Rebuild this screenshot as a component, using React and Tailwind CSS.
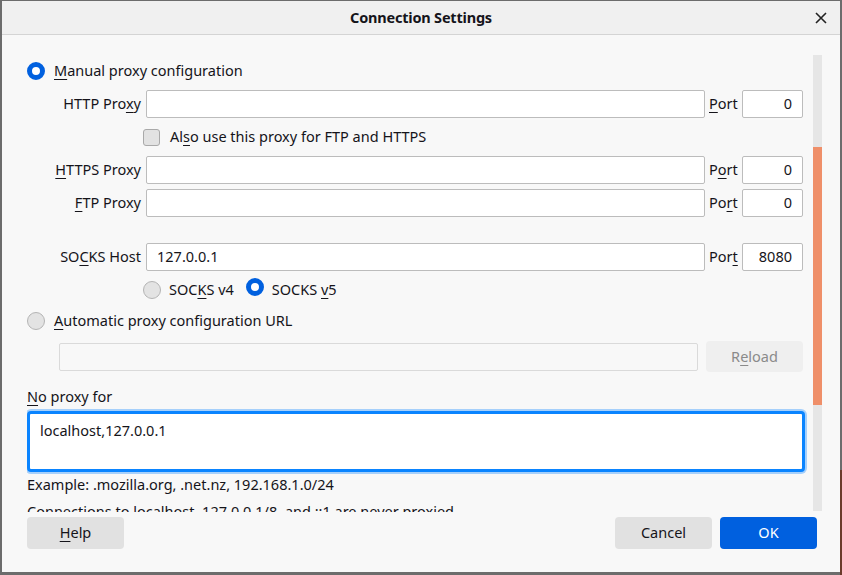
import React from "react"

const font = { fontFamily: '"Noto Sans", "Open Sans", sans-serif' }

const Key = ({ children }) => (
    <span className="underline underline-offset-[3px] decoration-1">{children}</span>
)

const Radio = ({ checked }) => (
    checked
        ? <span className="inline-block w-[18px] h-[18px] rounded-full border-[5px] border-[#0060df] bg-white shrink-0" />
        : <span className="inline-block w-[18px] h-[18px] rounded-full border border-[#b4b4b4] bg-[#e3e3e3] shrink-0" />
)

const Field = ({ value, className = "" }) => (
    <div className={"h-[28px] bg-white border border-[#bcbcbc] rounded-[2px] flex items-center px-[10px] " + className}>
        {value}
    </div>
)

// label | host field | port label | port field
const ProxyRow = ({ label, port, value, portValue, className = "" }) => (
    <div className={"flex items-center " + className}>
        <div className="w-[119px] text-right pr-[5px] whitespace-nowrap">{label}</div>
        <Field value={value} className="w-[559px]" />
        <div className="w-[37px] pl-[4px]">{port}</div>
        <Field value={portValue} className="w-[61px] justify-end" />
    </div>
)

const App = () => {
    return (
        <div style={font} className="w-[842px] h-[575px] flex text-[14.5px] text-[#15141a] bg-[#f8f8f8] overflow-hidden">
            <div className="flex-1 flex flex-col border-l-2 border-t border-b-[3px] border-[#6c6c6c]">
                <div className="h-[34px] shrink-0 bg-[#f0f0f0] border-b border-[#d4d4d4] flex items-center relative">
                    <div className="flex-1 text-center font-bold text-[14.5px] tracking-[-0.2px]">Connection Settings</div>
                    <div className="absolute right-[13px] top-[11px] leading-none">
                        <svg width="12" height="12" viewBox="0 0 12 12"><path d="M1 1 L11 11 M11 1 L1 11" stroke="#222" strokeWidth="1.6" /></svg>
                    </div>
                </div>

                <div className="flex flex-1 pt-[20px] pl-[25px] pr-[18px]">
                    <div className="flex-1 h-[457px] overflow-hidden pr-[7px]">
                        <div className="flex items-center gap-[9px] mt-[7px] h-[18px]">
                            <Radio checked />
                            <span><Key>M</Key>anual proxy configuration</span>
                        </div>

                        <ProxyRow label={<>HTTP Pro<Key>x</Key>y</>} port={<><Key>P</Key>ort</>} value="" portValue="0" className="mt-[10px]" />

                        <div className="flex items-center mt-[10px] pl-[116px] h-[18px]">
                            <span className="w-[17px] h-[17px] rounded-[3px] border border-[#a9a9a9] bg-[#e2e2e2]" />
                            <span className="ml-[10px]">Al<Key>s</Key>o use this proxy for FTP and HTTPS</span>
                        </div>

                        <ProxyRow label={<><Key>H</Key>TTPS Proxy</>} port={<>P<Key>o</Key>rt</>} value="" portValue="0" className="mt-[10px]" />
                        <ProxyRow label={<><Key>F</Key>TP Proxy</>} port={<>Po<Key>r</Key>t</>} value="" portValue="0" className="mt-[5px]" />
                        <ProxyRow label={<>SO<Key>C</Key>KS Host</>} port={<>Por<Key>t</Key></>} value="127.0.0.1" portValue="8080" className="mt-[26px]" />

                        <div className="flex items-center mt-[10px] pl-[116px] h-[18px]">
                            <Radio />
                            <span className="ml-[8px]">SOC<Key>K</Key>S v4</span>
                            <span className="ml-[12px]"><Radio checked /></span>
                            <span className="ml-[8px]">SOCKS <Key>v</Key>5</span>
                        </div>

                        <div className="flex items-center gap-[9px] mt-[13px] h-[18px]">
                            <Radio />
                            <span><Key>A</Key>utomatic proxy configuration URL</span>
                        </div>

                        <div className="flex items-center mt-[11px] pl-[32px]">
                            <div className="w-[639px] h-[28px] border border-[#dadada] rounded-[2px] bg-[#f8f8f8]" />
                            <div className="ml-[8px] w-[97px] h-[31px] rounded-[4px] bg-[#efefef] text-[#8a8a8a] flex items-center justify-center">R<Key>e</Key>load</div>
                        </div>

                        <div className="mt-[15px] h-[20px] flex items-center"><Key>N</Key>o proxy for</div>

                        <div className="mt-[4px] w-[778px] h-[61px] rounded-[4px] border-[3px] border-[#0a84ff] bg-white ring-2 ring-[#a6d0fb] px-[10px] pt-[6px]">
                            localhost,127.0.0.1
                        </div>

                        <div className="mt-[4px] h-[18px] flex items-center">Example: .mozilla.org, .net.nz, 192.168.1.0/24</div>
                        <div className="mt-[9px] h-[18px] flex items-center whitespace-nowrap">Connections to localhost, 127.0.0.1/8, and ::1 are never proxied.</div>
                    </div>
                    <div className="w-[9px] h-[456px] bg-[#e6e6e6] flex flex-col">
                        <div className="h-[92px]" />
                        <div className="h-[258px] bg-[#ef8f69]" />
                    </div>
                </div>

                <div className="flex items-center pl-[25px] pr-[23px] pb-[23px] h-[58px] pt-[3px] shrink-0">
                    <div className="w-[97px] h-[32px] rounded-[4px] bg-[#e1e1e1] flex items-center justify-center"><Key>H</Key>elp</div>
                    <div className="flex-1" />
                    <div className="w-[97px] h-[32px] rounded-[4px] bg-[#e1e1e1] flex items-center justify-center">Cancel</div>
                    <div className="ml-[8px] w-[97px] h-[32px] rounded-[4px] bg-[#0060df] text-white flex items-center justify-center">OK</div>
                </div>
            </div>
            <div className="w-[2px] flex flex-col">
                <div className="h-[470px] bg-[#6c6c6c]" />
                <div className="flex-1 bg-[#6b3b2b]" />
            </div>
        </div>
    )
}

export default App
